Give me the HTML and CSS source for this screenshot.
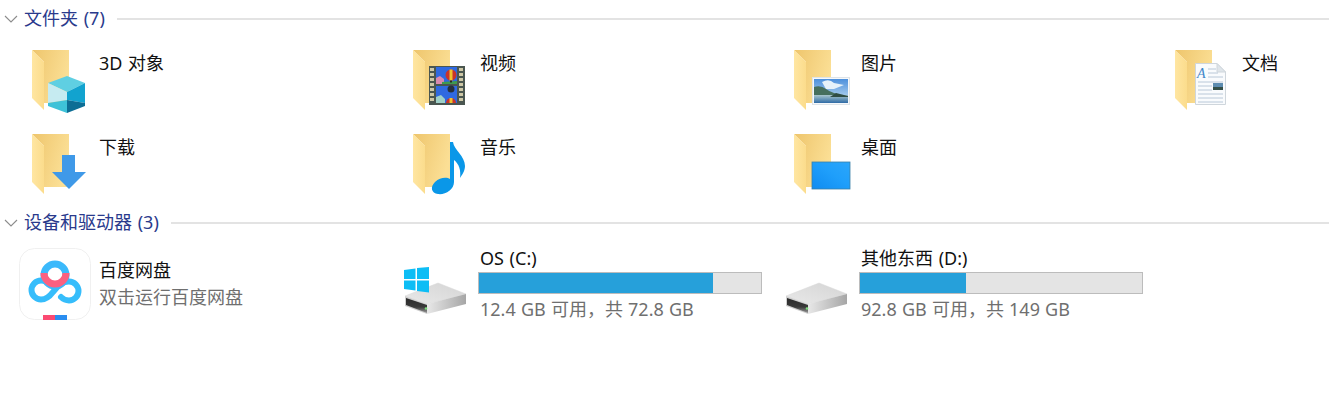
FILE: index.html
```html
<!DOCTYPE html>
<html lang="zh-CN">
<head>
<meta charset="utf-8">
<title>此电脑</title>
<link rel="stylesheet" href="styles.css">
</head>
<body>
<svg class="defs" aria-hidden="true">
  <defs>
    <linearGradient id="gFolderBack" x1="0" y1="0" x2="1" y2="0.4"><stop offset="0" stop-color="#eec56c"/><stop offset="1" stop-color="#fbdf95"/></linearGradient>
    <linearGradient id="gFlap" x1="0" y1="0" x2="1" y2="0"><stop offset="0" stop-color="#ffe6a2"/><stop offset="1" stop-color="#fbdc8c"/></linearGradient>
    <linearGradient id="gSky" x1="0" y1="0" x2="0" y2="1"><stop offset="0" stop-color="#4d90dc"/><stop offset="1" stop-color="#c9e3f4"/></linearGradient>
    <linearGradient id="gSea" x1="0" y1="0" x2="0" y2="1"><stop offset="0" stop-color="#a9c6cc"/><stop offset="1" stop-color="#2f6ba6"/></linearGradient>
    <linearGradient id="gDesk" x1="0" y1="1" x2="1" y2="0"><stop offset="0" stop-color="#0f8bf0"/><stop offset="0.55" stop-color="#1f9ffb"/><stop offset="1" stop-color="#2ba6fb"/></linearGradient>
    <linearGradient id="gTop" x1="0" y1="1" x2="1" y2="0"><stop offset="0" stop-color="#e9e9e9"/><stop offset="1" stop-color="#d4d4d4"/></linearGradient>
    <linearGradient id="gSide" x1="0" y1="0" x2="1" y2="0"><stop offset="0" stop-color="#e8e8e8"/><stop offset="1" stop-color="#a6a6a6"/></linearGradient>
    <linearGradient id="gFront" x1="0" y1="0" x2="0" y2="1"><stop offset="0" stop-color="#2a2a2a"/><stop offset="0.6" stop-color="#3a3a3a"/><stop offset="1" stop-color="#9a9a9a"/></linearGradient>
    <symbol id="folder" viewBox="0 0 60 64">
      <path d="M4 2H41V55H16V14Z" fill="url(#gFolderBack)"/>
      <path d="M4 2L16 14V62L4 50Z" fill="url(#gFlap)"/>
    </symbol>
    <symbol id="drive" viewBox="0 0 72 72">
      <path d="M5 48L38 35L66 46L27 56Z" fill="url(#gTop)" stroke="#d8d8d8" stroke-width="0.5" stroke-linejoin="round"/>
      <path d="M27 56L66 46V56L27 66Z" fill="url(#gSide)"/>
      <path d="M5 48L27 56V66L5 58Z" fill="#cfcfcf"/>
      <path d="M6 50L27 57V65L6 57Z" fill="url(#gFront)"/>
      <circle cx="26" cy="60.500" r="1.300" fill="#7fe07f"/>
    </symbol>
  </defs>
</svg>

<section class="group folders">
  <header class="group-head">
    <svg class="chevron" viewBox="0 0 14 8"><path d="M1 1L7 7L13 1"/></svg>
    <h2 class="group-title">文件夹 (7)</h2>
    <span class="rule"></span>
  </header>
  <div class="grid">
    <div class="item">
      <svg class="icon" viewBox="0 0 60 64"><use href="#folder"/>
        <path d="M20 35L39 28L57 35L39 44Z" fill="#5fcfe2"/>
        <path d="M20 35L39 44V52L20 55Z" fill="#c6ebf1"/>
        <path d="M39 44L57 35V55L39 52Z" fill="#12a3cf"/>
        <path d="M20 55L39 52V65L20 58Z" fill="#3ec2d8"/>
        <path d="M39 52L57 55V58L39 65Z" fill="#0d6e95"/>
      </svg>
      <span class="name">3D 对象</span>
    </div>
    <div class="item">
      <svg class="icon" viewBox="0 0 60 64"><use href="#folder"/>
        <rect x="20" y="18" width="36" height="39" fill="#4a5650"/>
        <g fill="#cdc7a6"><rect x="21" y="20" width="4" height="3"/><rect x="21" y="25" width="4" height="3"/><rect x="21" y="30" width="4" height="3"/><rect x="21" y="35" width="4" height="3"/><rect x="21" y="40" width="4" height="3"/><rect x="21" y="45" width="4" height="3"/><rect x="21" y="50" width="4" height="3"/><rect x="50" y="20" width="4" height="3"/><rect x="50" y="25" width="4" height="3"/><rect x="50" y="30" width="4" height="3"/><rect x="50" y="35" width="4" height="3"/><rect x="50" y="40" width="4" height="3"/><rect x="50" y="45" width="4" height="3"/><rect x="50" y="50" width="4" height="3"/></g>
        <rect x="27" y="19" width="21" height="17" fill="#2f69e0"/>
        <rect x="27" y="38" width="21" height="17" fill="#2f69e0"/>
        <path d="M27 30L31 28L35 31V36H27Z" fill="#d98ab0"/>
        <path d="M33 34L48 33V36H33Z" fill="#3f9a4f"/>
        <path d="M27 49L32 47L36 51V55H27Z" fill="#9fd0c8"/>
        <circle cx="42" cy="27" r="5.500" fill="#c9332b"/>
        <path d="M40.500 21.500H43.500V32.500H40.500Z" fill="#eec22f"/>
        <rect x="41" y="32.500" width="2" height="2" fill="#2c2a24"/>
        <circle cx="42" cy="41" r="3.500" fill="#27303e"/>
        <path d="M37 55A5 5 0 0 1 47 55Z" fill="#c9332b"/>
        <rect x="40.500" y="50" width="3" height="5" fill="#eec22f"/>
      </svg>
      <span class="name">视频</span>
    </div>
    <div class="item">
      <svg class="icon" viewBox="0 0 60 64"><use href="#folder"/>
        <rect x="22.500" y="29.500" width="37" height="27" fill="#f6f8fa" stroke="#dfe4e8"/>
        <rect x="24" y="31" width="34" height="24" fill="url(#gSky)"/>
        <path d="M32 34Q39 30 44 35L54 37L44 41H36Z" fill="#e6f2fa"/>
        <path d="M24 39Q31 37 36 41T58 49V50H24Z" fill="#466f5d"/>
        <rect x="24" y="47" width="34" height="8" fill="url(#gSea)"/>
        <path d="M40 49H58V48L46 45Z" fill="#2f4d44"/>
      </svg>
      <span class="name">图片</span>
    </div>
    <div class="item">
      <svg class="icon" viewBox="0 0 60 64"><use href="#folder"/>
        <path d="M24.500 15.500H46L54.500 24V56.500H24.500Z" fill="#f9fbfd" stroke="#cfd6dc"/>
        <path d="M46 15.500V24H54.500Z" fill="#dfe5ea" stroke="#cfd6dc"/>
        <text class="doc-a" x="26" y="30">A</text>
        <path d="M37 21H45M37 25H47M37 29H52M27 34H52M27 38H41M27 42H41M27 46H52M27 50H52M27 54H52" stroke="#b9c8d8" fill="none"/>
        <rect x="42" y="35" width="10" height="7" fill="#5d8cb0"/><rect x="42" y="39" width="10" height="3" fill="#344f48"/>
      </svg>
      <span class="name">文档</span>
    </div>
    <div class="item">
      <svg class="icon" viewBox="0 0 60 64"><use href="#folder"/>
        <path d="M34 23H47V40H58L41 57L24 40H34Z" fill="#3f99e8"/>
      </svg>
      <span class="name">下载</span>
    </div>
    <div class="item">
      <svg class="icon" viewBox="0 0 60 64"><use href="#folder"/>
        <path d="M41 10L44 10C45 18 56 24 56 34C56 39 53 43 51 46C52 38 50 32 45 28V50C45 58 36 63 29 62C22 61 21 55 26 50C31 45 38 45 41 47Z" fill="#0a97e8"/>
      </svg>
      <span class="name">音乐</span>
    </div>
    <div class="item">
      <svg class="icon" viewBox="0 0 60 64"><use href="#folder"/>
        <rect x="22" y="30" width="38" height="27" fill="url(#gDesk)" stroke="#3b7fa8" stroke-width="0.8"/>
      </svg>
      <span class="name">桌面</span>
    </div>
  </div>
</section>

<section class="group drives">
  <header class="group-head">
    <svg class="chevron" viewBox="0 0 14 8"><path d="M1 1L7 7L13 1"/></svg>
    <h2 class="group-title">设备和驱动器 (3)</h2>
    <span class="rule"></span>
  </header>
  <div class="drive-grid">
    <div class="drive-item app-item">
      <svg class="app-icon" viewBox="0 0 72 72">
        <rect x="0.500" y="0.500" width="71" height="71" rx="15" fill="#fff" stroke="#f0f0f0"/>
        <g fill="none">
          <path d="M42 49C45 52 48 52.500 50 52.500A9.500 9.500 0 0 0 50 33.500C42 33.500 38 39 34 44C31 48 27 51.500 22 51.500A9.500 9.500 0 0 1 22 32.500C24 32.500 26 33 28 34" stroke="#36bdfb" stroke-width="6" stroke-linecap="round"/>
          <circle cx="36" cy="27" r="11" stroke="#3bb9fb" stroke-width="7"/>
          <path d="M25 25A11 11 0 0 0 47 25" stroke="#fb6080" stroke-width="7"/>
        </g>
        <rect x="24" y="67" width="12" height="5" fill="#fb4a72"/>
        <rect x="36" y="67" width="12" height="5" fill="#2a8df0"/>
      </svg>
      <div class="app-text">
        <span class="name">百度网盘</span>
        <span class="sub">双击运行百度网盘</span>
      </div>
    </div>
    <div class="drive-item">
      <svg class="drive-icon" viewBox="0 0 72 72"><use href="#drive"/>
        <path d="M4 22L15.500 20.500V31H4ZM17 20L29 19V31H17ZM4 32.500H15.500V42.500L4 41ZM17 32.500H29V44.500L17 43Z" fill="#0dbdf5"/>
      </svg>
      <div class="drive-info">
        <span class="name label">OS (C:)</span>
        <div class="bar"><div class="fill fill-c"></div></div>
        <span class="sub label">12.4 GB 可用，共 72.8 GB</span>
      </div>
    </div>
    <div class="drive-item">
      <svg class="drive-icon" viewBox="0 0 72 72"><use href="#drive"/></svg>
      <div class="drive-info">
        <span class="name label">其他东西 (D:)</span>
        <div class="bar"><div class="fill fill-d"></div></div>
        <span class="sub label">92.8 GB 可用，共 149 GB</span>
      </div>
    </div>
  </div>
</section>
</body>
</html>
```
FILE: styles.css
```css
* { box-sizing: border-box; }
html, body { margin: 0; padding: 0; background: #fff; }
body {
  width: 1329px;
  height: 405px;
  overflow: hidden;
  font-family: "Noto Sans", "Noto Sans CJK SC", sans-serif;
  font-size: 18px;
  color: #111;
  word-spacing: 1px;
}
.defs { position: absolute; width: 0; height: 0; }
.group-head {
  display: flex;
  align-items: center;
  height: 24px;
  padding-left: 4px;
}
.chevron { width: 14px; height: 8px; fill: none; stroke: #8c8c8c; stroke-width: 1.1; flex: none; }
.group-title {
  margin: 0 0 2px 6px;
  font-size: 18px;
  font-weight: 400;
  line-height: 22px;
  color: #2a3a8c;
  white-space: nowrap;
}
.rule { flex: 1; height: 2px; margin-left: 12px; background: #e3e3e3; }
.folders { padding-top: 7px; }
.grid {
  display: grid;
  grid-template-columns: 381px 381px 381px 1fr;
  grid-auto-rows: 64px;
  row-gap: 20px;
  padding: 17px 0 15px 28px;
}
.item { display: flex; column-gap: 11px; }
.icon { width: 60px; height: 64px; flex: none; overflow: visible; }
.name { line-height: 26px; white-space: nowrap; }
.item .name { padding-top: 2px; }
.doc-a { font-family: "Liberation Serif", serif; font-style: italic; font-size: 14px; fill: #3f86c8; }
.drive-grid {
  display: grid;
  grid-template-columns: 381px 381px 381px;
  padding: 13px 0 0 19px;
}
.drive-item { display: flex; height: 72px; }
.app-item { column-gap: 8px; }
.app-icon { width: 72px; height: 72px; flex: none; }
.app-text { display: flex; flex-direction: column; padding-top: 9px; }
.app-text .sub { margin-top: 1px; }
.sub { color: #6f6f6f; line-height: 26px; white-space: nowrap; word-spacing: 0.5px; }
.drive-icon { width: 72px; height: 72px; flex: none; }
.drive-info { margin-left: 6px; width: 284px; display: flex; flex-direction: column; }
.label { padding-left: 2px; height: 25px; line-height: 20px; }
.sub.label { height: 26px; line-height: 30px; }
.bar { height: 22px; background: #e4e4e4; border: 1px solid #bcbcbc; flex: none; }
.fill { height: 100%; background: #26a0da; }
.fill-c { width: 83%; }
.fill-d { width: 37.6%; }
```
